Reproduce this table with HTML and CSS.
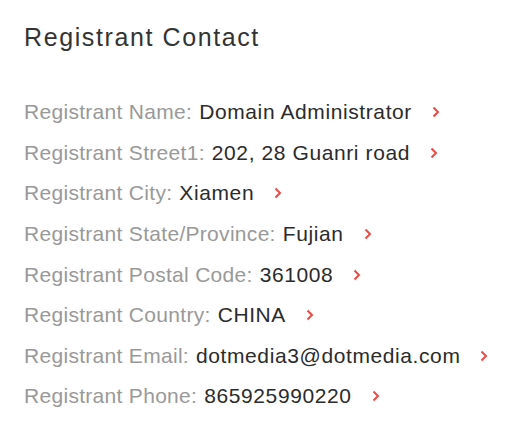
FILE: index.html
```html
<!DOCTYPE html>
<html>
<head>
<meta charset="utf-8">
<link rel="stylesheet" href="styles.css">
</head>
<body>
<div class="card">
  <h2 class="title">Registrant Contact</h2>
  <ul class="list">
    <li class="row"><span class="label">Registrant Name:</span><span class="value">Domain Administrator</span><svg class="chev" viewBox="0 0 8 12"><polyline points="1.5,1.5 6,6 1.5,10.5"/></svg></li>
    <li class="row"><span class="label">Registrant Street1:</span><span class="value">202, 28 Guanri road</span><svg class="chev" viewBox="0 0 8 12"><polyline points="1.5,1.5 6,6 1.5,10.5"/></svg></li>
    <li class="row"><span class="label">Registrant City:</span><span class="value">Xiamen</span><svg class="chev" viewBox="0 0 8 12"><polyline points="1.5,1.5 6,6 1.5,10.5"/></svg></li>
    <li class="row"><span class="label">Registrant State/Province:</span><span class="value">Fujian</span><svg class="chev" viewBox="0 0 8 12"><polyline points="1.5,1.5 6,6 1.5,10.5"/></svg></li>
    <li class="row"><span class="label">Registrant Postal Code:</span><span class="value">361008</span><svg class="chev" viewBox="0 0 8 12"><polyline points="1.5,1.5 6,6 1.5,10.5"/></svg></li>
    <li class="row"><span class="label">Registrant Country:</span><span class="value">CHINA</span><svg class="chev" viewBox="0 0 8 12"><polyline points="1.5,1.5 6,6 1.5,10.5"/></svg></li>
    <li class="row"><span class="label">Registrant Email:</span><span class="value">dotmedia3@dotmedia.com</span><svg class="chev" viewBox="0 0 8 12"><polyline points="1.5,1.5 6,6 1.5,10.5"/></svg></li>
    <li class="row"><span class="label">Registrant Phone:</span><span class="value">865925990220</span><svg class="chev" viewBox="0 0 8 12"><polyline points="1.5,1.5 6,6 1.5,10.5"/></svg></li>
  </ul>
</div>
</body>
</html>
```
FILE: styles.css
```css
html, body { margin: 0; padding: 0; background: #fff; }
body { font-family: "Liberation Sans", Arial, sans-serif; }
.card { padding: 22px 24px; }
.title { margin: 0 0 40px; font-size: 25px; letter-spacing: 1.6px; font-weight: normal; color: #333; line-height: 30px; }
.list { list-style: none; margin: 0; padding: 0; display: flex; flex-direction: column; }
.row { display: flex; align-items: center; height: 40.6px; font-size: 21px; }
.label { color: #999; margin-right: 7px; letter-spacing: 0.3px; }
.value { color: #2b2b2b; letter-spacing: 0.6px; }
.chev { width: 8px; height: 12px; margin-left: 20px; fill: none; stroke: #ec4a45; stroke-width: 2; }
```
